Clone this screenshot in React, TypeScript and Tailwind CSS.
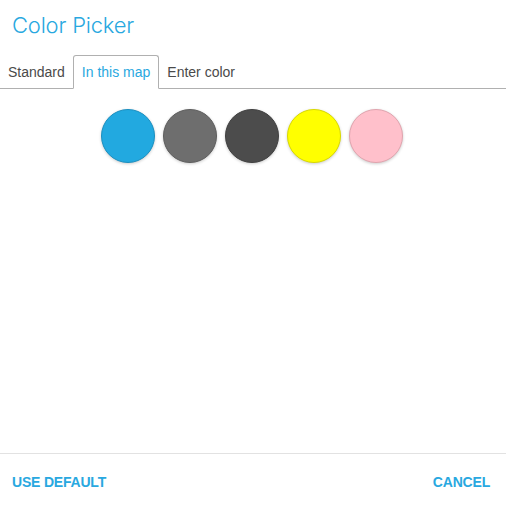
import React, { useState } from 'react';

const colors = ['#22a9e0', '#6e6e6e', '#4c4c4c', '#ffff00', '#ffc0cb'];
const borders = ['#1b8fc0', '#5e5e5e', '#404040', '#d8d800', '#e0a4ae'];

const tabs = ['Standard', 'In this map', 'Enter color'];

const App: React.FC = () => {
    const [active, setActive] = useState(1);

    return (
        <div className="w-[506px] h-[506px] bg-white flex flex-col font-['Liberation_Sans',Arial,sans-serif]">
            <h1 className="px-3 pt-[11px] h-[55px] text-[22px] leading-[28px] font-light text-[#29a8e0] font-['Inter','Liberation_Sans',sans-serif] tracking-[-0.2px]">
                Color Picker
            </h1>
            <div className="flex border-b border-[#b0b0b0] h-[34px]">
                {tabs.map((tab, i) => (
                    <button
                        key={tab}
                        onClick={() => setActive(i)}
                        className={`text-[14px] leading-[33px] -mb-px ${
                            i === active
                                ? 'px-[8px] text-[#29a8e0] border border-[#b0b0b0] border-b-white bg-white rounded-t-[3px]'
                                : 'px-[7px] text-[#4a4a4a] border border-transparent'
                        }`}
                    >
                        {tab}
                    </button>
                ))}
            </div>
            <div className="flex-1 flex justify-center gap-2 pt-[20px] pr-[2px]">
                {colors.map((c, i) => (
                    <div
                        key={c}
                        className="w-[54px] h-[54px] rounded-full border shadow-[0_1px_3px_rgba(0,0,0,0.2)]"
                        style={{ backgroundColor: c, borderColor: borders[i] }}
                    />
                ))}
            </div>
            <div className="border-t border-[#e2e2e2] h-[53px] flex items-center justify-between px-3 pt-[4px]">
                <button className="text-[14px] font-bold text-[#29a8e0] tracking-[-0.2px]">USE DEFAULT</button>
                <button className="text-[14px] font-bold text-[#29a8e0] tracking-[-0.2px] mr-[4px]">CANCEL</button>
            </div>
        </div>
    );
};

export default App;
